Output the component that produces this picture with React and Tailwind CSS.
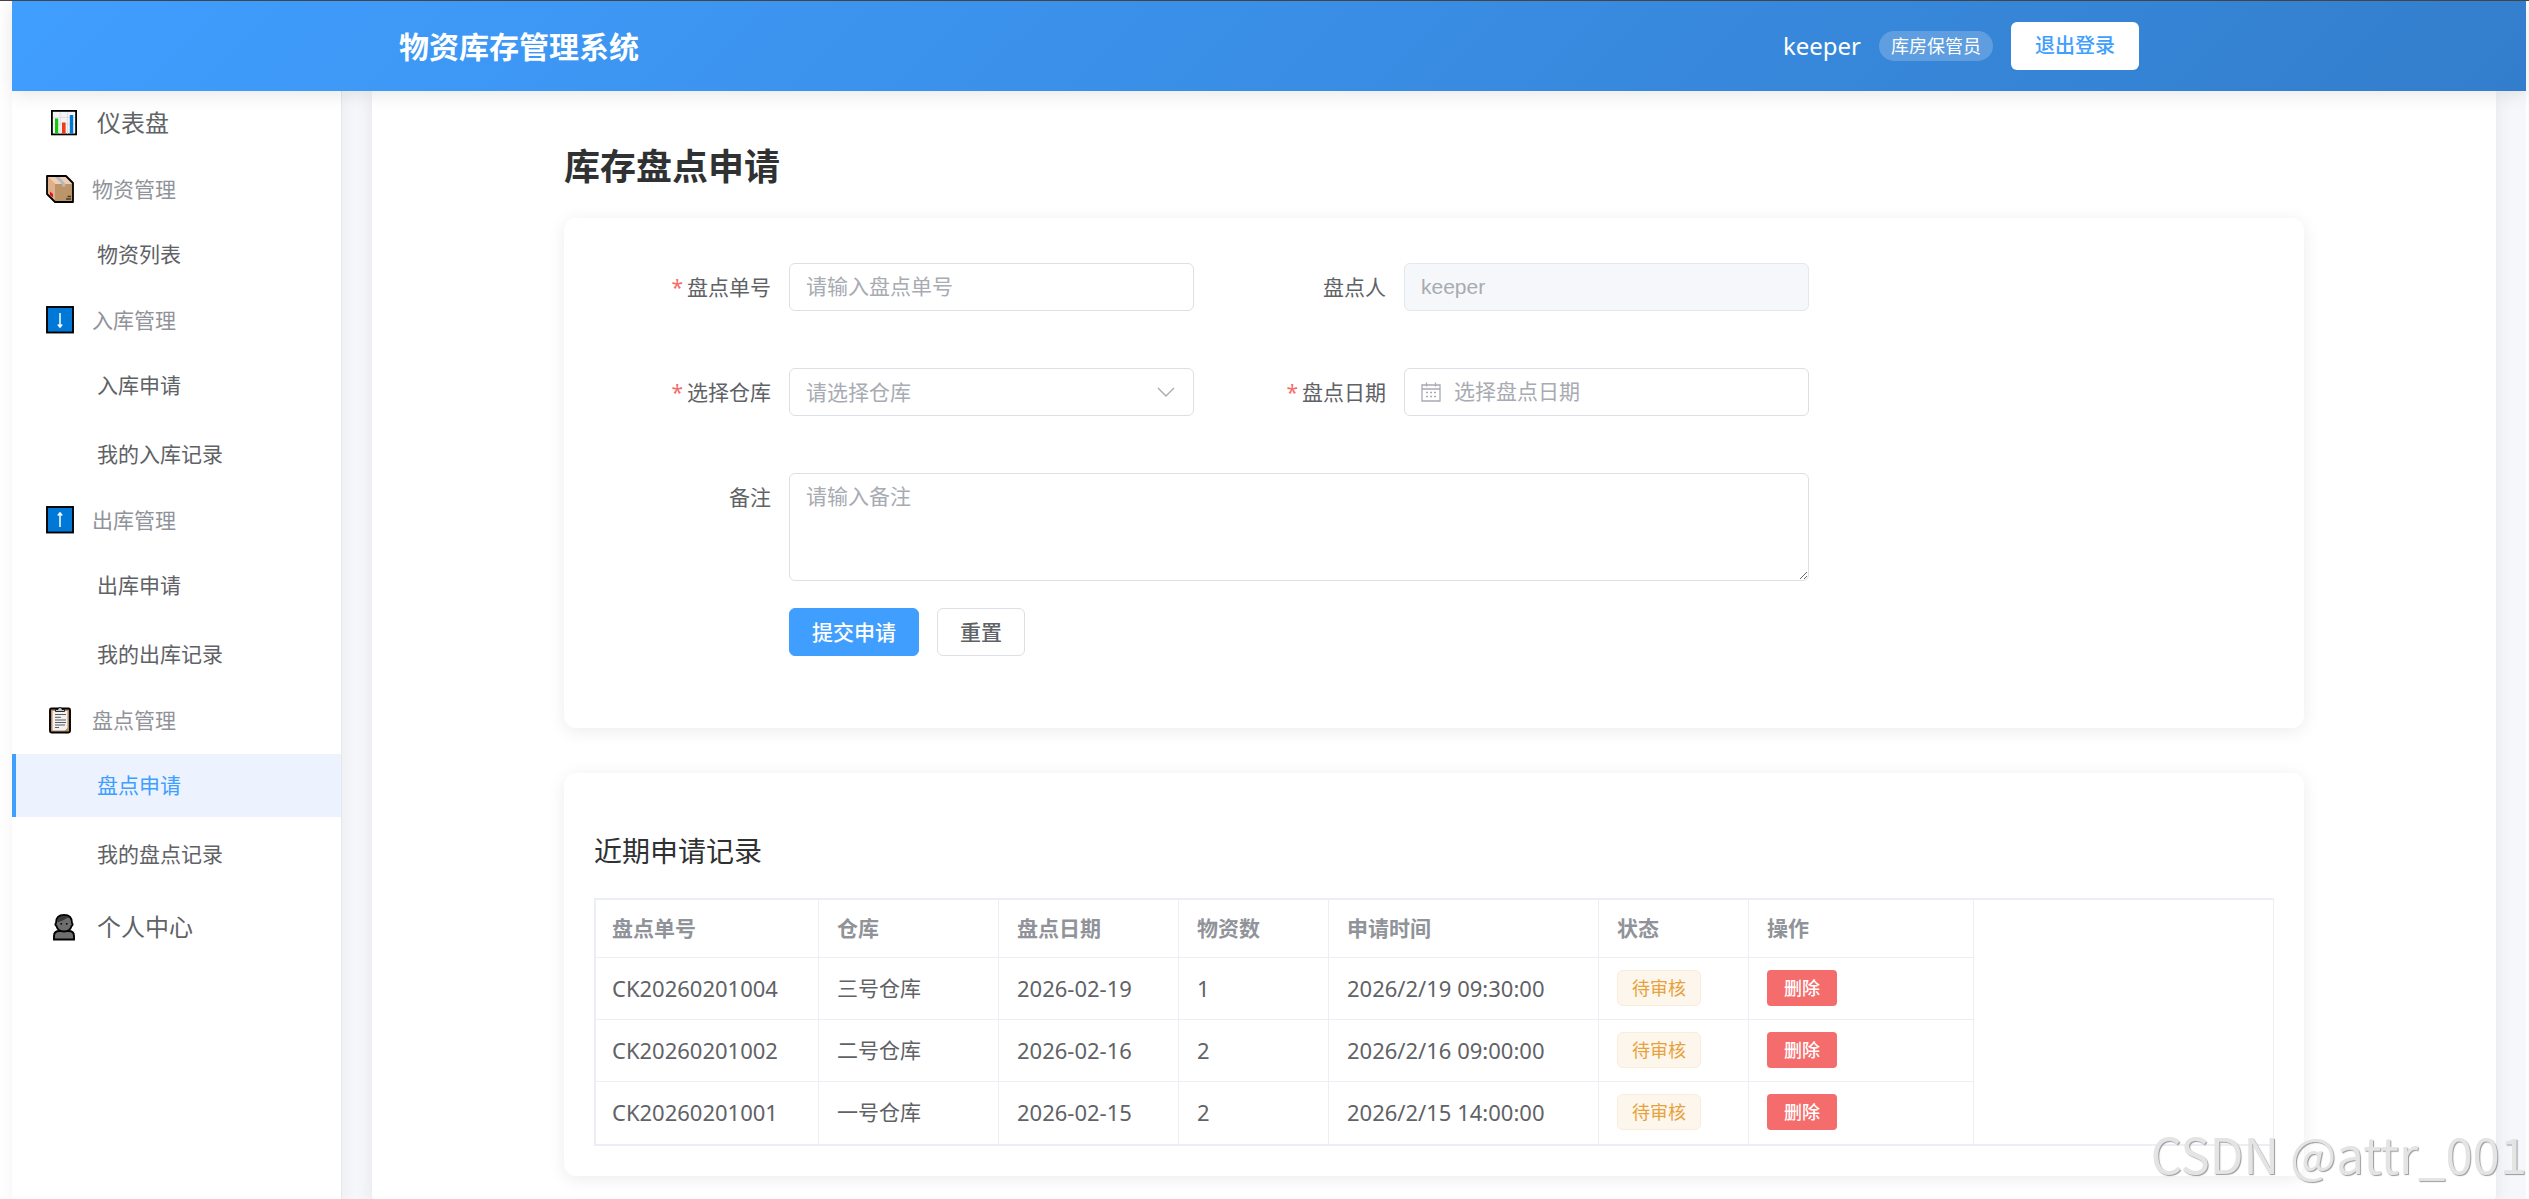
import React from "react";

function ChartIcon() {
  return (
    <svg viewBox="0 0 28 28" className="size-7 shrink-0" aria-hidden="true">
      <rect x="0.9" y="1.900" width="24.200" height="23.500" fill="#f4f4f4" stroke="#000" strokeWidth="1.800" />
      <path d="M2 8.500h22M2 15h22M9.200 3v22M16.500 3v22" stroke="#d8dade" strokeWidth="0.800" />
      <rect x="4" y="9.500" width="3.200" height="15" fill="#16c60c" />
      <rect x="11" y="13.500" width="3.600" height="11" fill="#f03a17" />
      <rect x="18.800" y="6" width="3.400" height="18.500" fill="#0078d7" />
    </svg>
  );
}

function BoxIcon() {
  return (
    <svg viewBox="0 0 28 28" className="size-7 shrink-0" aria-hidden="true">
      <path d="M1 1h19l7 7v19H9l-8-8z" fill="#bc9469" />
      <path d="M1.500 1.500h18.300l6.500 7.500H9z" fill="#f0cdb3" />
      <path d="M1.500 1.500L9 9v17.500L1.500 19z" fill="#deb18b" />
      <path d="M9 2h4.500l6 7v2.500h-3.500V9z" fill="#b4b9bd" />
      <path d="M4 16.500l3 2.500v3.500l-3-2.500z" fill="#e81224" />
      <path d="M21.500 21.500h3.500M20 24h5" stroke="#4a3a28" strokeWidth="1.400" />
      <path d="M1 1h19l7 7v19H9l-8-8z" fill="none" stroke="#000" strokeWidth="1.800" strokeLinejoin="round" />
    </svg>
  );
}

function ArrowIcon({ up }) {
  return (
    <svg viewBox="0 0 28 28" className="size-7 shrink-0" aria-hidden="true">
      <rect x="1" y="1" width="26" height="25.500" fill="#0078d7" stroke="#000" strokeWidth="1.900" />
      <path
        d={up ? "M14 21V7M11.800 9.500L14 7l2.200 2.500" : "M14 7v14M11.800 18.500L14 21l2.200-2.500"}
        fill="none"
        stroke="#fff"
        strokeWidth="1.500"
      />
    </svg>
  );
}

function ClipboardIcon() {
  return (
    <svg viewBox="0 0 28 28" className="size-7 shrink-0" aria-hidden="true">
      <rect x="4" y="2.500" width="20" height="24" rx="1.500" fill="#b98a62" stroke="#000" strokeWidth="1.900" />
      <path d="M6.500 5h15v17l-2.500 2.500H6.500z" fill="#f2f2f2" />
      <path d="M9.500 5.500V3.500h2.500a2 2 0 0 1 4 0h2.500v2z" fill="#c8c8c8" stroke="#000" strokeWidth="0.800" />
      <path d="M9 8.500h11M9 11.300h6M9 14h11M9 16.500h11M9 19h10M9 21.500h4" stroke="#5b5b5b" strokeWidth="1" />
    </svg>
  );
}

function PersonIcon() {
  return (
    <svg viewBox="0 0 28 28" className="size-7 shrink-0" aria-hidden="true">
      <path d="M3 26.500v-3.500c0-3.500 2.500-5 5.500-5h9c3 0 5.500 1.500 5.500 5v3.500z" fill="#6e6e6e" stroke="#000" strokeWidth="1.900" />
      <path d="M5 10c0-5 3-8 8-8s8 3 8 8c1 1 .8 2.500-.4 3-1 3.500-4 5.500-7.600 5.500S6.400 16.500 5.400 13C4.200 12.500 4 11 5 10z" fill="#6e6e6e" stroke="#000" strokeWidth="1.800" />
      <path d="M5.800 9C6 5 9 2.800 13 2.800c2.200 0 3.800.7 5 1.800C14.500 5 12.500 8.800 5.800 9z" fill="#383838" />
      <circle cx="10.300" cy="10.800" r="0.900" fill="#000" />
      <circle cx="15.700" cy="10.800" r="0.900" fill="#000" />
    </svg>
  );
}

const sections = [
  { title: "物资管理", icon: <BoxIcon />, items: ["物资列表"] },
  { title: "入库管理", icon: <ArrowIcon />, items: ["入库申请", "我的入库记录"] },
  { title: "出库管理", icon: <ArrowIcon up />, items: ["出库申请", "我的出库记录"] },
  { title: "盘点管理", icon: <ClipboardIcon />, items: ["盘点申请", "我的盘点记录"] },
];

const records = [
  { no: "CK20260201004", store: "三号仓库", date: "2026-02-19", count: 1, time: "2026/2/19 09:30:00" },
  { no: "CK20260201002", store: "二号仓库", date: "2026-02-16", count: 2, time: "2026/2/16 09:00:00" },
  { no: "CK20260201001", store: "一号仓库", date: "2026-02-15", count: 2, time: "2026/2/15 14:00:00" },
];

const headings = [
  ["盘点单号", "w-[223px]"],
  ["仓库", "w-[180px]"],
  ["盘点日期", "w-[180px]"],
  ["物资数", "w-[150px]"],
  ["申请时间", "w-[270px]"],
  ["状态", "w-[150px]"],
  ["操作", "w-[225px]"],
];

function Field({ id, label, required, children }) {
  return (
    <div className="flex items-start">
      <label htmlFor={id} className="flex h-12 w-[180px] shrink-0 items-center justify-end gap-1 pr-[18px]">
        {required && <span className="text-[#f56c6c]">*</span>}
        {label}
      </label>
      <div className="relative grow">{children}</div>
    </div>
  );
}

function Header() {
  return (
    <header className="relative z-10 shrink-0 bg-[linear-gradient(135deg,#409eff,#337ecc)] text-white shadow-[0_3px_18px_rgba(0,0,0,0.1)]">
      <div className="mx-auto flex h-[90px] max-w-[1740px] items-center justify-between">
        <div className="text-[30px] leading-[45px] font-bold">物资库存管理系统</div>
        <div className="flex items-center gap-[18px]">
          <span className="text-2xl">keeper</span>
          <span className="rounded-full bg-white/20 px-3 text-lg leading-[30px]">库房保管员</span>
          <button type="button" className="h-12 rounded-md bg-white px-6 text-xl font-medium text-[#409eff]">
            退出登录
          </button>
        </div>
      </div>
    </header>
  );
}

function Sidebar() {
  return (
    <aside className="w-[330px] shrink-0 border-r border-[#e4e7ed] bg-white shadow-[0_3px_18px_rgba(0,0,0,0.05)]">
      <nav>
        <a href="#dashboard" className="mb-[3px] flex h-16 items-center gap-[18px] pl-[39px] text-2xl">
          <ChartIcon />
          仪表盘
        </a>
        {sections.map((s) => (
          <div key={s.title}>
            <div className="flex h-[62px] items-center gap-[18px] pl-[34px] text-[#909399]">
              {s.icon}
              {s.title}
            </div>
            <ul>
              {s.items.map((item) => (
                <li key={item} className="py-[3px]">
                  <a
                    href={"#" + item}
                    className={
                      item === "盘点申请"
                        ? "flex h-[63px] items-center border-l-4 border-[#409eff] bg-[#ecf3ff] pb-0.5 pl-[81px] text-[#409eff]"
                        : "flex h-[63px] items-center border-l-4 border-transparent pb-0.5 pl-[81px]"
                    }
                  >
                    {item}
                  </a>
                </li>
              ))}
            </ul>
          </div>
        ))}
        <a href="#profile" className="flex h-[76px] items-center gap-[18px] pl-[39px] text-2xl">
          <PersonIcon />
          个人中心
        </a>
      </nav>
    </aside>
  );
}

function RequestForm() {
  return (
    <form className="rounded-xl bg-white px-[45px] pt-[45px] pb-[72px] shadow-[0_3px_18px_rgba(0,0,0,0.08)]">
      <div className="grid max-w-[1200px] grid-cols-2 gap-x-[30px]">
        <div className="mb-[57px]">
          <Field id="no" label="盘点单号" required>
            <input
              id="no"
              type="text"
              placeholder="请输入盘点单号"
              className="block h-12 w-full rounded-md border border-[#dcdfe6] bg-white px-4 pb-0.5 outline-none placeholder:text-[#a8abb2]"
            />
          </Field>
        </div>
        <div className="mb-[57px]">
          <Field id="person" label="盘点人">
            <input
              id="person"
              type="text"
              disabled
              defaultValue="keeper"
              className="block h-12 w-full rounded-md border border-[#e4e7ed] bg-[#f5f7fa] px-4 font-['Liberation_Sans',sans-serif] text-[#a8abb2]"
            />
          </Field>
        </div>
        <div className="mb-[57px]">
          <Field id="store" label="选择仓库" required>
            <select
              id="store"
              defaultValue=""
              className="block h-12 w-full appearance-none rounded-md border border-[#dcdfe6] bg-white px-4 text-[#a8abb2] outline-none"
            >
              <option value="">请选择仓库</option>
              <option>一号仓库</option>
              <option>二号仓库</option>
              <option>三号仓库</option>
            </select>
            <svg viewBox="0 0 18 10" className="pointer-events-none absolute top-[19px] right-[19px] h-2.5 w-[18px]" aria-hidden="true">
              <path d="M1 1l8 8 8-8" fill="none" stroke="#a8abb2" strokeWidth="1.400" />
            </svg>
          </Field>
        </div>
        <div className="mb-[57px]">
          <Field id="date" label="盘点日期" required>
            <input
              id="date"
              type="text"
              placeholder="选择盘点日期"
              className="block h-12 w-full rounded-md border border-[#dcdfe6] bg-white pr-4 pb-0.5 pl-[49px] outline-none placeholder:text-[#a8abb2]"
            />
            <svg viewBox="0 0 20 20" className="pointer-events-none absolute top-3.5 left-[17px] size-5" aria-hidden="true">
              <path d="M1 3h18v16H1zM1 7h18M5.500 0.500v4M14.500 0.500v4" fill="none" stroke="#a8abb2" strokeWidth="1.300" />
              <path d="M5 10.500h2M9 10.500h2M13 10.500h2M5 14.500h2M9 14.500h2M13 14.500h2" stroke="#a8abb2" strokeWidth="1.400" />
            </svg>
          </Field>
        </div>
        <div className="col-span-2 mb-[27px]">
          <Field id="remark" label="备注">
            <textarea
              id="remark"
              placeholder="请输入备注"
              className="block h-[108px] w-full resize-y rounded-md border border-[#dcdfe6] bg-white px-4 py-1.5 leading-8 outline-none placeholder:text-[#a8abb2]"
            />
          </Field>
        </div>
      </div>
      <div className="flex gap-[18px] pl-[180px] font-medium">
        <button type="submit" className="h-12 rounded-md border border-[#409eff] bg-[#409eff] px-[22px] text-white">
          提交申请
        </button>
        <button type="reset" className="h-12 rounded-md border border-[#dcdfe6] bg-white px-[22px]">
          重置
        </button>
      </div>
    </form>
  );
}

function Records() {
  const cell = "border-r border-b border-[#ebeef5] pl-[18px] pb-0.5";
  return (
    <section className="mt-[45px] rounded-xl bg-white px-[30px] pt-[57px] pb-[30px] shadow-[0_3px_18px_rgba(0,0,0,0.08)]">
      <h2 className="mb-[26px] text-[28px] leading-[42px] text-[#303133]">近期申请记录</h2>
      <div className="border-y-2 border-r border-l-2 border-[#ebeef5]">
        <table className="w-[1378px] table-fixed border-separate border-spacing-0 text-left">
          <thead>
            <tr className="h-[58px] text-[#909399]">
              {headings.map(([name, width], i) => (
                <th
                  key={name}
                  scope="col"
                  className={"border-r border-b border-[#ebeef5] pb-0.5 font-bold " + (i === 0 ? "pl-4 " : "pl-[18px] ") + width}
                >
                  {name}
                </th>
              ))}
            </tr>
          </thead>
          <tbody className="[&>tr:last-child>td]:border-b-0">
            {records.map((r) => (
              <tr key={r.no} className="h-[62px]">
                <td className="border-r border-b border-[#ebeef5] pb-0.5 pl-4 text-[22px]">{r.no}</td>
                <td className={cell}>{r.store}</td>
                <td className={cell + " text-[22px]"}>{r.date}</td>
                <td className={cell + " text-[22px]"}>{r.count}</td>
                <td className={cell + " text-[22px]"}>{r.time}</td>
                <td className={cell}>
                  <span className="flex h-9 w-fit items-center rounded-md border border-[#faecd8] bg-[#fdf6ec] px-3.5 text-lg text-[#e6a23c]">
                    待审核
                  </span>
                </td>
                <td className={cell}>
                  <button type="button" className="block h-9 rounded-sm bg-[#f56c6c] px-[17px] text-lg font-medium text-white">
                    删除
                  </button>
                </td>
              </tr>
            ))}
          </tbody>
        </table>
      </div>
    </section>
  );
}

export default function App() {
  return (
    <div className="relative flex h-screen flex-col overflow-hidden border-t border-[#444] bg-white pr-[3px] pl-3 font-['Noto_Sans','Noto_Sans_CJK_SC',sans-serif] text-[21px] leading-[30px] text-[#606266]">
      <Header />
      <div className="flex shrink-0 grow bg-[#f5f7fa]">
        <Sidebar />
        <main className="mx-[30px] min-w-0 grow rounded-b-xl bg-white px-[30px] pt-[53px] pb-[30px] shadow-[0_3px_18px_rgba(0,0,0,0.08)]">
          <div className="mx-auto max-w-[1740px]">
            <h1 className="mb-[29px] text-4xl leading-[45px] font-bold text-[#303133]">库存盘点申请</h1>
            <RequestForm />
            <Records />
          </div>
        </main>
      </div>
      <div className="pointer-events-none absolute right-0.5 bottom-4 z-20 font-['Noto_Sans_CJK_SC',sans-serif] text-[49px] leading-[60px] text-[#e4e4e4] [text-shadow:1px_1px_1px_#999]">
        CSDN @attr_001
      </div>
    </div>
  );
}
